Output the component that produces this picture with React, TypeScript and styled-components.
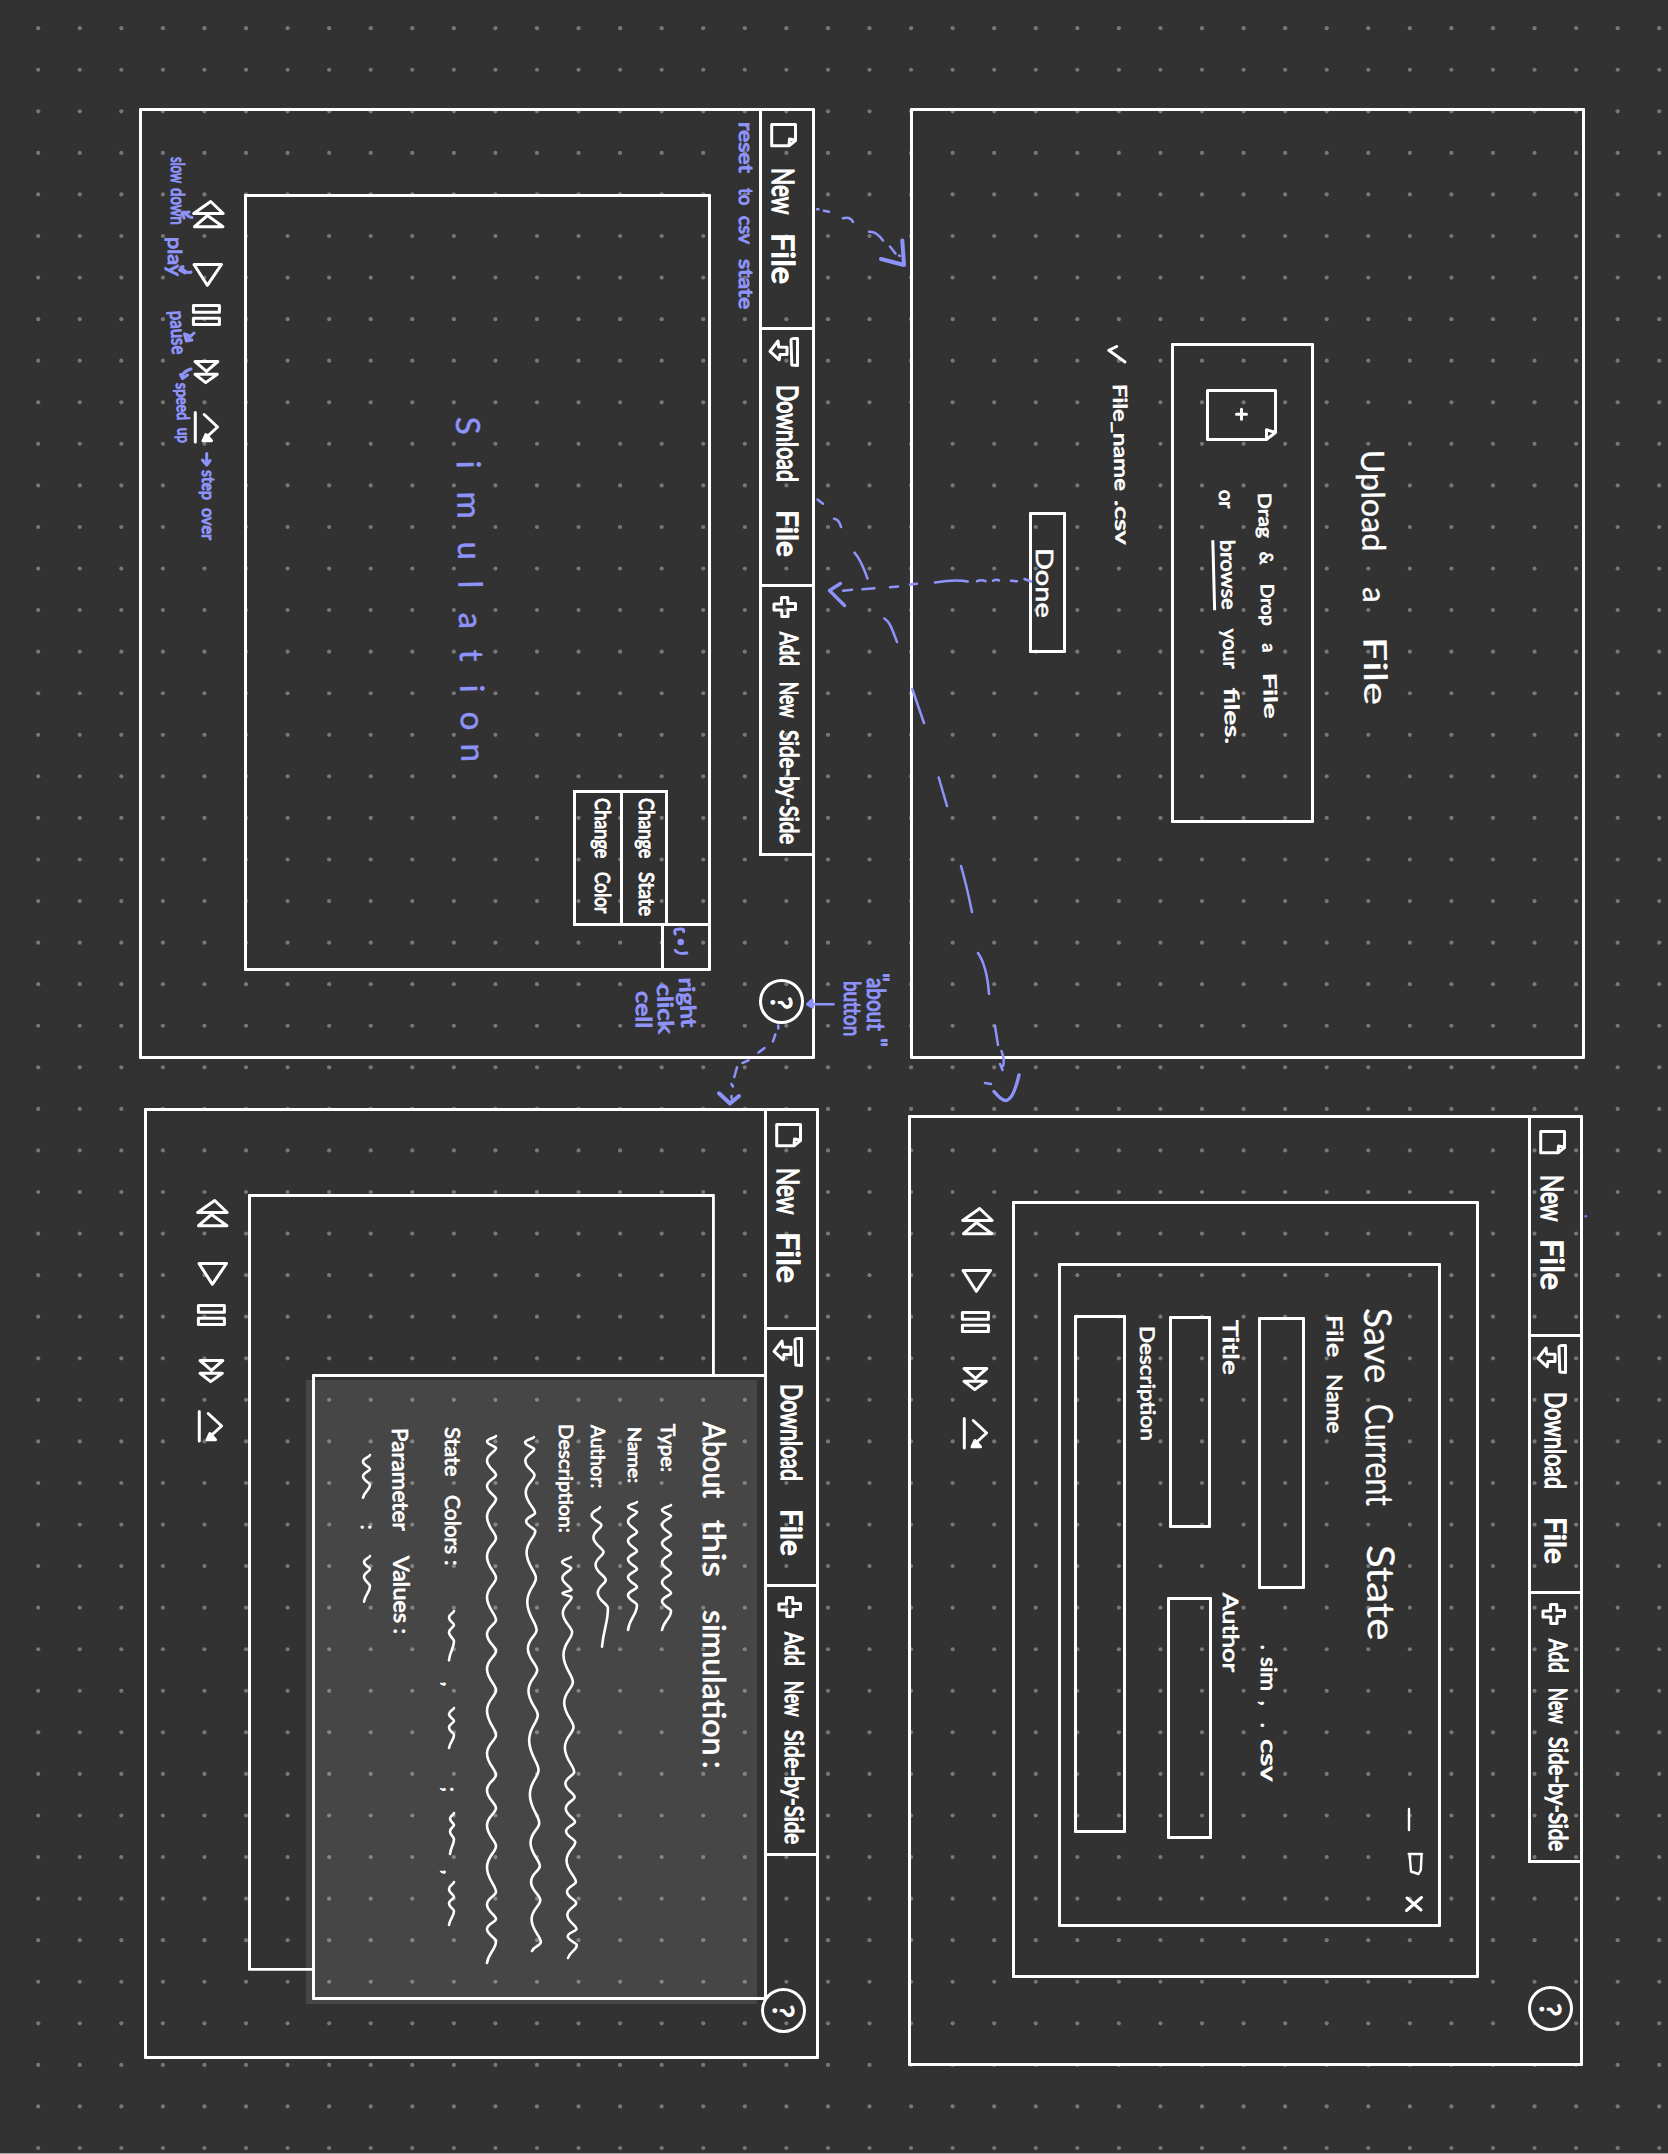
import React, { useLayoutEffect, useRef, useState } from 'react';
import styled, { createGlobalStyle, css } from 'styled-components';

const PAPER = '#323232';
const WHITE = '#ffffff';
const BLUE = '#8e93fa';
const DOT = '#777777';
const STEP = 41.565;

const GlobalStyle = createGlobalStyle`
  html, body { margin: 0; padding: 0; background: ${PAPER}; }
  *, *::before, *::after { box-sizing: border-box; }
`;

/* ---------- page and board ---------- */

const Page = styled.div`
  position: relative;
  width: 1668px;
  height: 2154px;
  overflow: hidden;
  background: ${PAPER};
  border-bottom: 1px solid #a5a3a5;
`;

const Overlay = styled.svg`
  position: absolute;
  left: 0;
  top: 0;
  fill: none;
  stroke: ${BLUE};
  stroke-width: 2.5;
  stroke-linecap: round;
  stroke-linejoin: round;
`;

/* The board is laid out in landscape and turned a quarter clockwise. */
const Board = styled.main`
  position: relative;
  display: flex;
  width: 2154px;
  height: 1668px;
  transform-origin: 0 0;
  transform: translateX(1668px) rotate(90deg);
  color: ${WHITE};
  font-family: Lato, 'Open Sans', 'Liberation Sans', sans-serif;
`;

const Column = styled.section<{ $left: number; $top: number }>`
  display: flex;
  flex-direction: column;
  align-items: flex-start;
  flex: none;
  margin-left: ${(p) => p.$left}px;
  padding-top: ${(p) => p.$top}px;
  width: 951px;
`;

const Frame = styled.article<{ $left?: number; $top?: number }>`
  position: relative;
  display: flex;
  flex-direction: column;
  align-items: flex-start;
  flex: none;
  width: 951px;
  height: 675.6px;
  margin: ${(p) => p.$top ?? 0}px 0 0 ${(p) => p.$left ?? 0}px;
  border: 3px solid ${WHITE};
  border-radius: 1px;
`;

const Row = styled.div<{ $top?: number; $left?: number; $height?: number }>`
  display: flex;
  align-items: flex-start;
  flex: none;
  margin-top: ${(p) => p.$top ?? 0}px;
  padding-left: ${(p) => p.$left ?? 0}px;
  ${(p) => p.$height !== undefined && css`height: ${p.$height}px;`}
`;

const Box = styled.div<{ $w: number; $h: number; $top?: number; $left?: number }>`
  flex: none;
  display: flex;
  width: ${(p) => p.$w}px;
  height: ${(p) => p.$h}px;
  margin: ${(p) => p.$top ?? 0}px 0 0 ${(p) => p.$left ?? 0}px;
  border: 3px solid ${WHITE};
  border-radius: 1px;
`;

/* ---------- handwriting ---------- */

type WordSpec = [text: string, width: number, gap?: number, underline?: boolean];

const Line = styled.div<{ $size: number; $top?: number; $left?: number; $tilt?: number; $bold?: number }>`
  display: flex;
  flex: none;
  height: ${(p) => p.$size}px;
  margin: ${(p) => p.$top ?? 0}px 0 0 ${(p) => p.$left ?? 0}px;
  font-size: ${(p) => p.$size}px;
  line-height: 1;
  white-space: nowrap;
  -webkit-text-stroke: ${(p) => p.$bold ?? 0.8}px currentColor;
  stroke-linejoin: round;
  transform-origin: 0 88%;
  ${(p) => p.$tilt && css`transform: rotate(${p.$tilt}deg);`}
`;

const WordSlot = styled.span<{ $w: number; $gap: number; $underline?: boolean }>`
  display: block;
  flex: none;
  width: ${(p) => p.$w}px;
  margin-left: ${(p) => p.$gap}px;
  ${(p) => p.$underline && css`
    height: 27px;
    border-bottom: 3px solid currentColor;
  `}
`;

const Glyphs = styled.span`
  display: inline-block;
  transform-origin: 0 50%;
`;

function Word({ spec }: { spec: WordSpec }) {
  const [text, width, gap = 0, underline] = spec;
  const ref = useRef<HTMLSpanElement>(null);
  const [scale, setScale] = useState(1);
  useLayoutEffect(() => {
    if (ref.current && ref.current.offsetWidth && text.length > 1) setScale(width / ref.current.offsetWidth);
  }, [text, width]);
  return (
    <WordSlot $w={width} $gap={gap} $underline={underline}>
      <Glyphs ref={ref} style={{ transform: `scaleX(${scale})` }}>{text}</Glyphs>
    </WordSlot>
  );
}

interface InkProps { size: number; words: WordSpec[]; top?: number; left?: number; tilt?: number; bold?: number }

function Ink({ size, words, top, left, tilt, bold }: InkProps) {
  return (
    <Line $size={size} $top={top} $left={left} $tilt={tilt} $bold={bold}>
      {words.map((w, i) => <Word key={i} spec={w} />)}
    </Line>
  );
}

const NoteSpot = styled.div<{ $x: number; $y: number }>`
  position: absolute;
  left: ${(p) => p.$x}px;
  top: ${(p) => p.$y}px;
  color: ${BLUE};
`;

function Note({ x, base, ...ink }: { x: number; base: number } & InkProps) {
  return (
    <NoteSpot $x={x} $y={base - ink.size * 0.887}>
      <Ink bold={1.1} {...ink} />
    </NoteSpot>
  );
}

/* ---------- drawings ---------- */

const Drawing = styled.svg<{ $top?: number; $left?: number; $stroke?: number; $blue?: boolean }>`
  display: block;
  flex: none;
  overflow: visible;
  margin: ${(p) => p.$top ?? 0}px 0 0 ${(p) => p.$left ?? 0}px;
  fill: none;
  stroke: ${(p) => (p.$blue ? BLUE : WHITE)};
  stroke-width: ${(p) => p.$stroke ?? 3};
  stroke-linecap: round;
  stroke-linejoin: round;
`;

interface SquiggleProps { crests: number[]; width: number; depth?: number; rise?: number; top?: number; left?: number }

/* A pen wave: narrow crests at the given offsets, broad troughs between them. */
function Squiggle({ crests, width, depth = 9, rise = 0, top = 0, left = 0 }: SquiggleProps) {
  const y = (x: number) => 1 - (rise * x) / width;
  const pts = [0, ...crests];
  let d = `M0 ${y(0)}`;
  for (let i = 1; i < pts.length; i++) {
    const a = pts[i - 1];
    const b = pts[i];
    const s = b - a;
    const t = a + s * 0.46;
    const low = y(t) + depth;
    d += `C${a + s * 0.14} ${y(a)} ${t - s * 0.24} ${low} ${t} ${low}`;
    d += `C${t + s * 0.26} ${low} ${b - s * 0.14} ${y(b)} ${b} ${y(b)}`;
  }
  const end = pts[pts.length - 1];
  d += `C${end + (width - end) * 0.4} ${y(end)} ${end + (width - end) * 0.5} ${y(width) + depth * 0.8} ${width} ${y(width) + depth}`;
  return (
    <Drawing width={width} height={14} $top={top} $left={left} $stroke={2.6}>
      <path d={d} />
    </Drawing>
  );
}

const FileIcon = () => (
  <Drawing width={24} height={27} $left={12} $top={14.5}>
    <path d="M1.5 1.5H17.5L22.8 8V25.3H1.5ZM17 2L16 7.5L22.5 8" />
  </Drawing>
);

const DownloadIcon = () => (
  <Drawing width={30} height={31} $left={6.8} $top={13.1}>
    <path d="M1.5 1.5H28.5L28 7.2L3 8Q1 8 1.5 1.5ZM10.3 12H17.5V19L22.8 19.8L14.3 29L4 21L10 20.3Z" />
  </Drawing>
);

const PlusIcon = () => (
  <Drawing width={22} height={25} $left={9} $top={14.5}>
    <path d="M7.5 1.5H13.5V9H20.5V15.2H14V23H8V15.5H1.5V9.2H7.5Z" />
  </Drawing>
);

/* ---------- simulator window ---------- */

const Toolbar = styled.nav`
  display: flex;
  flex: none;
  width: 745px;
  height: 52.6px;
`;

const Tool = styled.div<{ $w: number }>`
  display: flex;
  align-items: flex-start;
  flex: none;
  width: ${(p) => p.$w}px;
  border-right: 3px solid ${WHITE};
  border-bottom: 3px solid ${WHITE};
`;

const Help = styled.div<{ $dx: number; $dy: number }>`
  position: relative;
  z-index: 3;
  display: flex;
  flex: none;
  width: 45px;
  height: 45px;
  margin: ${(p) => 7.8 + p.$dy}px 0 0 ${(p) => 123 + p.$dx}px;
  padding-left: 14px;
  border: 3px solid ${WHITE};
  border-radius: 50%;
`;

const Stage = styled.div<{ $covered?: boolean }>`
  display: flex;
  flex-direction: column;
  flex: none;
  width: 777px;
  height: 467px;
  margin: 48.7px 0 0 83px;
  border: 3px solid ${WHITE};
  border-radius: 1px;
  ${(p) => p.$covered && css`
    clip-path: polygon(0 0, 181px 0, 181px 402px, 777px 402px, 777px 467px, 0 467px);
  `}
`;

function Controls() {
  return (
    <Row $top={18.5} $left={88.5}>
      <Drawing width={28} height={33}>
        <path d="M1.5 14.3L13.5 1.8V31.3ZM15.5 17.5L26.7 2V30.5Z" />
      </Drawing>
      <Drawing width={24} height={30} $left={34.7} $top={1.7}>
        <path d="M1.5 1.5V29L22.3 15.7Z" />
      </Drawing>
      <Drawing width={24} height={29} $left={17.6} $top={3.7}>
        <path d="M1.6 1.6H8.3V27.6H1.6ZM14.3 1.6H20.6V27.6H14.3Z" />
      </Drawing>
      <Drawing width={24} height={25} $left={31.7} $top={5.7}>
        <path d="M1.5 1.2V24L11.4 12.5ZM14.2 1.7V24L22.6 13.3Z" />
      </Drawing>
      <Drawing width={32} height={25} $left={26.7} $top={6}>
        <path d="M1.5 23.7H31M3.5 14.8L16 1.4L28 14.5" />
        <path d="M29.8 16V7.5L23.5 13Z" fill={WHITE} />
      </Drawing>
    </Row>
  );
}

interface SimProps { left?: number; top?: number; helpDx?: number; helpDy?: number; covered?: boolean; children?: React.ReactNode; over?: React.ReactNode }

function SimWindow({ left, top, helpDx = 0, helpDy = 0, covered, children, over }: SimProps) {
  return (
    <Frame $left={left} $top={top}>
      <Row $height={52.6}>
        <Toolbar>
          <Tool $w={219}>
            <FileIcon />
            <Ink size={30} bold={1.4} top={12.6} left={20.8} words={[['New', 46.7], ['File', 51, 17.7]]} />
          </Tool>
          <Tool $w={257}>
            <DownloadIcon />
            <Ink size={28} bold={1.4} top={10} left={17.7} words={[['Download', 96.7], ['File', 46.7, 28.3]]} />
          </Tool>
          <Tool $w={269}>
            <PlusIcon />
            <Ink size={24.5} bold={1.3} top={10.6} left={13.9} words={[['Add', 34.2], ['New', 35.4, 15], ['Side-by-Side', 114.5, 13.5]]} />
          </Tool>
        </Toolbar>
        <Help $dx={helpDx} $dy={helpDy}>
          <Ink size={29} bold={1.1} top={4} words={[['?', 12]]} />
        </Help>
      </Row>
      <Stage $covered={covered}>{children}</Stage>
      <Controls />
      {over}
    </Frame>
  );
}

/* ---------- main simulation screen ---------- */

const MenuRow = styled.div`
  display: flex;
  justify-content: flex-end;
  align-items: flex-start;
  height: 135px;
`;

const Menu = styled.div`
  flex: none;
  width: 136.4px;
  margin: 39.3px -3px 0 0;
  border-top: 3px solid ${WHITE};
`;

const MenuItem = styled.div<{ $h: number }>`
  height: ${(p) => p.$h}px;
  display: flex;
  border: 3px solid ${WHITE};
  border-top: 0;
`;

const Cell = styled.div`
  flex: none;
  display: flex;
  width: 45px;
  height: 46.7px;
  border-left: 3px solid ${WHITE};
  border-bottom: 3px solid ${WHITE};
`;

const NoteInk = styled.div`
  display: flex;
  color: ${BLUE};
`;

const SIMULATION: WordSpec[] = [
  ['S', 21.7], ['i', 6, 22], ['m', 28, 25], ['u', 14, 22], ['l', 8, 25],
  ['a', 16, 24], ['t', 15, 21], ['i', 8, 20], ['o', 18, 19], ['n', 21, 14],
];

function SimulationScreen() {
  return (
    <SimWindow left={0.7} top={94.7}>
      <MenuRow>
        <Menu>
          <MenuItem $h={45.7}>
            <Ink size={20.5} bold={1} top={8} left={5.2} words={[['Change', 60.3], ['State', 44, 13.7]]} />
          </MenuItem>
          <MenuItem $h={47}>
            <Ink size={20.5} bold={1} top={6.6} left={4.5} words={[['Change', 60.3], ['Color', 41.3, 14.4]]} />
          </MenuItem>
        </Menu>
        <Cell>
          <Drawing width={27} height={14} $left={2} $top={19.2} $blue>
            <path d="M6 12.7C2 14 1.3 13.5 1.2 10C.8 6 1 3.8 3.6 4.4M22.4 12.7C25.5 11 25.8 6 25.1 1.2" />
            <circle cx={14} cy={7.3} r={1.8} fill={BLUE} />
          </Drawing>
        </Cell>
      </MenuRow>
      <NoteInk>
        <Ink size={33} bold={0.5} tilt={-0.9} top={87.5} left={219.5} words={SIMULATION} />
      </NoteInk>
    </SimWindow>
  );
}

/* ---------- upload screen ---------- */

const Lines = styled.div`
  display: flex;
  flex-direction: column;
`;

function UploadScreen() {
  return (
    <Frame>
      <Ink size={32} bold={0.3} tilt={-0.8} top={192.9} left={339.2} words={[['Upload', 102], ['a', 21.7, 35], ['File', 68, 28.3]]} />
      <Box $w={479.7} $h={143.4} $top={43} $left={232.7}>
        <Drawing width={52} height={71} $left={42.7} $top={34}>
          <path d="M1.5 1.5H43.5L50.5 10.5V69.5H1.5ZM43.5 1.5L40.8 10.5H50.5M20.3 35.5H30.3M25.3 30.5V40.5" />
        </Drawing>
        <Lines>
          <Ink size={18} top={36.9} left={52} tilt={-1.7} words={[['Drag', 44.7], ['&', 14.7, 14], ['Drop', 42, 17.3], ['a', 11, 18], ['File', 45.4, 18.3]]} />
          <Ink size={20} top={19.3} left={48.7} tilt={-1.5} words={[['or', 19], ['browse', 69.5, 31, true], ['your', 40, 19.5], ['files.', 56, 19]]} />
        </Lines>
      </Box>
      <Row $top={40.7} $left={234} $height={26}>
        <Drawing width={18} height={20} $top={4}>
          <path d="M1.5 9.3L5.3 17.3L17 1" />
        </Drawing>
        <Ink size={19} left={21.5} tilt={-1} words={[['File_name', 106.7], ['.csv', 44, 9]]} />
      </Row>
      <Box $w={141.4} $h={37} $top={38.6} $left={401}>
        <Ink size={24} bold={0.6} top={5.2} left={33.5} words={[['Done', 70]]} />
      </Box>
    </Frame>
  );
}

/* ---------- save screen ---------- */

const Dialog = styled.div`
  display: flex;
  flex-direction: column;
  align-items: flex-start;
  width: 664px;
  height: 383px;
  margin: 35.4px 0 0 59.3px;
  border: 3px solid ${WHITE};
  border-radius: 1px;
`;

function SaveScreen() {
  return (
    <SimWindow left={7.4}>
      <Dialog>
        <Row $top={15} $left={541.2} $height={18}>
          <Drawing width={23} height={18} $stroke={2.4}><path d="M1 14H22" /></Drawing>
          <Drawing width={22} height={18} $left={22.6} $stroke={2.4}><path d="M1 14.3V1M1.2 1.4L17 2.2L21 4.5L18.5 12L1 13.4" /></Drawing>
          <Drawing width={16} height={18} $left={21}><path d="M1.5 1.5L14.5 16.5M14 2L2 16" /></Drawing>
        </Row>
        <Ink size={38} bold={0.2} tilt={-0.7} top={6.4} left={41.8} words={[['Save', 75.4], ['Current', 102.4, 20.6], ['State', 96, 38.3]]} />
        <Ink size={22} top={14.6} left={48.5} words={[['File', 42.7], ['Name', 59.3, 16]]} />
        <Row $top={19.3} $left={50.3} $height={46.6}>
          <Box $w={272.7} $h={46.6} />
          <Ink size={21} top={24.9} left={55.2} words={[['.', 5], ['sim', 33.7, 7.6], [',', 6, 9.7], ['.', 5, 16], ['csv', 42.6, 11]]} />
        </Row>
        <Ink size={22} top={16.1} left={53.5} words={[['Title', 55], ['Author', 79.6, 217.7]]} />
        <Row $top={8} $left={49.3} $height={44}>
          <Box $w={212.4} $h={41.4} $top={1} />
          <Box $w={242.3} $h={44.5} $left={69} />
        </Row>
        <Ink size={20} top={10} left={59.2} tilt={-0.6} words={[['Description', 115]]} />
        <Box $w={518.4} $h={52.5} $top={11.8} $left={48.3} />
      </Dialog>
    </SimWindow>
  );
}

/* ---------- about screen ---------- */

const AboutPanel = styled.aside`
  position: absolute;
  z-index: 2;
  left: 263px;
  top: 49.6px;
  width: 626.7px;
  height: 454.8px;
  border: 3px solid ${WHITE};
  border-radius: 1px;

  &::before {
    content: '';
    position: absolute;
    z-index: -1;
    left: 3.2px;
    top: 6.5px;
    width: 624px;
    height: 451px;
    background: rgba(255, 255, 255, 0.1);
  }
`;

const LONG_A = [11, 33, 40, 75, 125, 170, 215, 240, 265, 285, 325, 346, 372, 388];
const LONG_B = [12, 38, 76, 94, 141, 193, 233, 278, 333, 386, 429, 463, 505];
const LONG_C = [12, 39, 63, 102, 142, 184, 215, 254, 299, 339, 372, 410, 456, 483, 505];

function AboutScreen() {
  const panel = (
    <AboutPanel>
      <Ink size={30} bold={0.7} top={33.4} left={45} words={[['About', 76.6], ['this', 57.3, 21.7], ['simulation', 146, 32.7], [':', 5, 5]]} />
      <Row $top={22.6} $left={47.2} $height={19}>
        <Ink size={19} words={[['Type:', 48.3]]} />
        <Squiggle left={32.7} top={6} width={125} crests={[11, 30, 48, 68, 88, 106]} />
      </Row>
      <Row $top={15} $left={50} $height={18}>
        <Ink size={18} words={[['Name:', 56]]} />
        <Squiggle left={19.3} top={6} width={128} crests={[10, 30, 49, 67, 85, 103]} />
      </Row>
      <Row $top={16.7} $left={48.2} $height={20}>
        <Ink size={20} words={[['Author:', 63]]} />
        <Squiggle left={19} top={8} width={139.7} rise={11} crests={[18, 45, 73, 101]} />
      </Row>
      <Row $top={11.5} $left={47.2} $height={20}>
        <Ink size={20} words={[['Description:', 109]]} />
        <Squiggle left={24.3} top={5} width={401} rise={6} crests={LONG_A} />
      </Row>
      <Row $top={17.8} $left={60.2} $height={16}>
        <Squiggle width={514} top={5} rise={7} crests={LONG_B} />
      </Row>
      <Row $top={25} $left={59.2} $height={16}>
        <Squiggle width={527} top={2} crests={LONG_C} />
      </Row>
      <Row $top={18.4} $left={50.2} $height={22}>
        <Ink size={22} words={[['State', 50], ['Colors', 59, 18], [':', 6, 6]]} />
        <Squiggle left={45.4} top={9} width={49.3} depth={5} crests={[14, 30]} />
        <Ink size={20} top={3} left={21} words={[[',', 5]]} />
        <Squiggle left={21} top={9} width={40} depth={5} crests={[13, 27]} />
        <Ink size={20} top={3} left={39} words={[[';', 5]]} />
        <Squiggle left={21} top={9} width={41} depth={4} crests={[12, 26]} />
        <Ink size={20} top={3} left={16} words={[[',', 5]]} />
        <Squiggle left={7} top={9} width={43} depth={5} crests={[15, 29]} />
      </Row>
      <Ink size={22} tilt={-0.6} top={31.6} left={51} words={[['Parameter', 103], ['Values', 67.3, 25.3], [':', 5, 5]]} />
      <Row $top={15} $left={78.2} $height={20}>
        <Squiggle width={42.7} top={3} depth={7} crests={[14, 30]} />
        <Ink size={19} top={-4} left={27} words={[[':', 5]]} />
        <Squiggle left={26} top={3} width={45.7} depth={6} crests={[13, 30]} />
      </Row>
    </AboutPanel>
  );
  return <SimWindow top={88.8} helpDx={9} helpDy={2.7} covered over={panel} />;
}

/* ---------- annotations ---------- */

function Notes() {
  return (
    <>
      <Note x={121.7} base={929} size={20} words={[['reset', 51], ['to', 17, 15], ['csv', 28, 11], ['state', 50, 15]]} />
      <Note x={157} base={1497} size={19} words={[['slow', 26], ['down', 37, 5]]} />
      <Note x={237} base={1500} size={20} words={[['play', 39]]} />
      <Note x={311} base={1498} size={20} tilt={-3} words={[['pause', 44]]} />
      <Note x={383} base={1492} size={17} tilt={-2} words={[['speed', 37], ['up', 15, 8]]} />
      <Note x={470} base={1466} size={17} words={[['step', 30], ['over', 32, 8]]} />
      <Note x={977.8} base={988.5} size={21} tilt={-3} words={[['right', 50]]} />
      <Note x={984} base={1010.5} size={21} tilt={-2} words={[['click', 50]]} />
      <Note x={990.5} base={1033} size={22} words={[['cell', 37]]} />
      <Note x={973} base={796} size={24} words={[['"', 8]]} />
      <Note x={977.8} base={801.5} size={25} words={[['about', 53]]} />
      <Note x={1038} base={798} size={24} words={[['"', 8]]} />
      <Note x={981} base={824} size={23} words={[['button', 55]]} />
    </>
  );
}

function Arrows() {
  return (
    <Overlay width={1668} height={2154}>
      {/* New File to upload */}
      <path d="M817 209.2H818.5M824 210.8L829 211.7M843 218.3Q850 216 853 222M869 231.8Q876 231 883 240.5M890 246.5L895.5 253.5M899 255.5L900 256" />
      <path strokeWidth={4} d="M902.3 240.5L904 265L881 259" />
      {/* Download File to save dialog */}
      <path d="M817.5 499.5L823 503.7M834 518.7Q839 519 841 527M854.5 552.7Q861 560 867.5 578.5M884.3 618.5C889 621 891 626 897 642M912.3 689L924 723M938.7 777.5L947 806M961 866Q966 883 972 912M978 953Q987 966 989 994M995 1026L998 1045M1001.5 1051Q1005 1060 1003 1066M1000 1064L1002.5 1070M985 1083L991 1084" />
      <path strokeWidth={3.4} d="M994 1091.5C1003 1102 1011 1110 1019 1075" />
      {/* Done to simulation */}
      <path d="M1031 581.5L1024.5 579M1017 581.2L1011 580.7M999 580.4Q996 578.8 993 580.8M985.5 581.2Q981 579.5 977 581.2M967.7 581.4Q955 579 935 582.5M917 583.7L910 584.5M898 586.6L890 587.3M874.5 588.3L862.5 589.3M852 589.8L843 590.7" />
      <path strokeWidth={3.4} d="M840.5 583.5L829.5 590.5L844.5 605.5" />
      {/* About button */}
      <path d="M833.5 1004.3H809" />
      <path strokeWidth={3} d="M812 1000L807.5 1004.3L812.5 1007.3Z" fill={BLUE} />
      <path d="M778.3 1025.5V1028.5M775.3 1034.5L773 1041.3M764.5 1048L758.5 1052.5M748.5 1060.3L742.5 1063M737 1067.3L734.3 1077M731.5 1084L733 1086.5M731.5 1096V1098.5" />
      <path strokeWidth={4} d="M719 1093.3L730 1103.5L739 1096" />
      {/* pointers beside the transport controls */}
      <path strokeWidth={3} d="M192 217.5Q188 217 184 212M189 212L182 213L184 218M191 272Q186 274 181 267M183 266.5L179.5 270L185 273M194 333L187 340M190 336L184.5 334M184.5 334L186.5 341L192 340M191 369Q184 371 182 376M180.5 374.5L182.5 378.5L187.5 375M206.7 453.5V464M202.5 460L206.7 465L210 460.5" />
      <path d="M1585.5 1216.2H1586" stroke="#6f74e0" />
    </Overlay>
  );
}

const COLS = Array.from({ length: 40 }, (_, i) => 38.2 + i * STEP);
const ROWS = Array.from({ length: 52 }, (_, i) => 28.2 + i * STEP);

const DotLayer = styled.svg`
  position: absolute;
  left: 0;
  top: 0;
  fill: ${DOT};
`;

function DotGrid() {
  return (
    <DotLayer width={1668} height={2154}>
      {ROWS.map((y) => COLS.map((x) => <circle key={`${x}-${y}`} cx={x} cy={y} r={2.1} />))}
    </DotLayer>
  );
}

export default function App() {
  return (
    <Page>
      <GlobalStyle />
      <DotGrid />
      <Board>
        <Column $left={107.8} $top={82.9}>
          <UploadScreen />
          <SimulationScreen />
        </Column>
        <Column $left={49} $top={84.5}>
          <SaveScreen />
          <AboutScreen />
        </Column>
        <Notes />
      </Board>
      <Arrows />
    </Page>
  );
}
